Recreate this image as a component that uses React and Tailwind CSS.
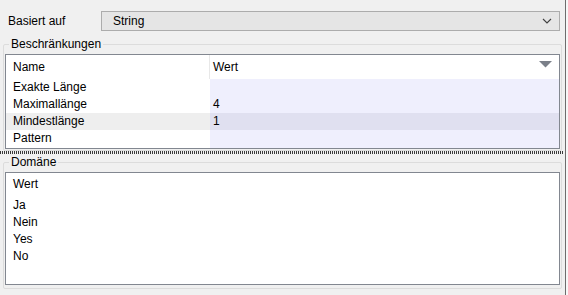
import React from 'react';

const rows = [
  { name: 'Exakte Länge', value: '' },
  { name: 'Maximallänge', value: '4' },
  { name: 'Mindestlänge', value: '1', selected: true },
  { name: 'Pattern', value: '' },
];

const domain = ['Ja', 'Nein', 'Yes', 'No'];

const GroupBox = ({ title, className, children }) => (
  <fieldset className={`border border-[#dcdcdc] rounded-[2px] ${className}`}>
    <legend className="ml-[4px] px-[2px] leading-[14px]">{title}</legend>
    {children}
  </fieldset>
);

export default function App() {
  return (
    <div
      className="w-[568px] h-[295px] bg-[#f0f0f0] text-[12px] text-[#000] flex overflow-hidden"
      style={{ fontFamily: '"Liberation Sans", Arial, sans-serif' }}
    >
      <div className="w-[563px] flex flex-col">
        {/* Basiert auf */}
        <div className="flex items-center h-[20px] mt-[11px] pl-[8px] pr-[3px]">
          <span className="w-[93px]">Basiert auf</span>
          <div className="flex-1 h-[20px] bg-[#e5e5e5] border border-[#acacac] flex items-center pl-[11px] pr-[7px]">
            <span className="flex-1">String</span>
            <svg width="10" height="6" viewBox="0 0 10 6">
              <polyline points="1,1 5,5 9,1" fill="none" stroke="#404040" strokeWidth="1.1" />
            </svg>
          </div>
        </div>

        {/* Beschränkungen */}
        <GroupBox title="Beschränkungen" className="mt-[6px] ml-[3px] mr-[1px] px-[1px] pb-[1px]">
          <div className="border border-[#828790] bg-white h-[95px] mt-[3px] flex flex-col">
            <div className="flex h-[24px] items-center shrink-0">
              <div className="w-[204px] pl-[7px] border-r border-[#e8e8e8] h-full flex items-center">Name</div>
              <div className="flex-1 pl-[3px] flex items-center">Wert</div>
              <svg width="13" height="7" viewBox="0 0 13 7" className="mr-[7px] mb-[6px]">
                <polygon points="0,0 13,0 6.5,6.5" fill="#7b8089" />
              </svg>
            </div>
            <div className="flex-1 flex">
              <div className="w-[204px] flex flex-col">
                {rows.map((r) => (
                  <div
                    key={r.name}
                    className={`h-[17px] leading-[17px] pl-[7px] ${r.selected ? 'bg-[#eeeeee]' : ''}`}
                  >
                    {r.name}
                  </div>
                ))}
              </div>
              <div className="flex-1 bg-[#efeffd] flex flex-col">
                {rows.map((r) => (
                  <div
                    key={r.name}
                    className={`h-[17px] leading-[17px] pl-[3px] ${r.selected ? 'bg-[#e0e0f0]' : ''}`}
                  >
                    {r.value}
                  </div>
                ))}
              </div>
            </div>
          </div>
        </GroupBox>

        {/* Splitter */}
        <div
          className="h-[3px] shrink-0"
          style={{
            backgroundImage:
              'repeating-linear-gradient(90deg, #3a3a3a 0 1px, transparent 1px 2px)',
          }}
        />

        {/* Domäne */}
        <GroupBox title="Domäne" className="mt-[1px] ml-[3px] mr-[1px] px-[1px] pb-[3px]">
          <div className="border border-[#828790] bg-white h-[113px] mt-[3px] flex flex-col">
            <div className="h-[24px] leading-[22px] pl-[7px]">Wert</div>
            {domain.map((d) => (
              <div key={d} className="h-[17px] leading-[17px] pl-[7px]">
                {d}
              </div>
            ))}
          </div>
        </GroupBox>
      </div>

      {/* right edge of neighbouring panel */}
      <div className="w-[5px] flex">
        <div className="w-[2px]" />
        <div className="w-[1px] bg-[#6d6d6d]" />
        <div className="flex-1 bg-[#f7f7f7]" />
      </div>
    </div>
  );
}
